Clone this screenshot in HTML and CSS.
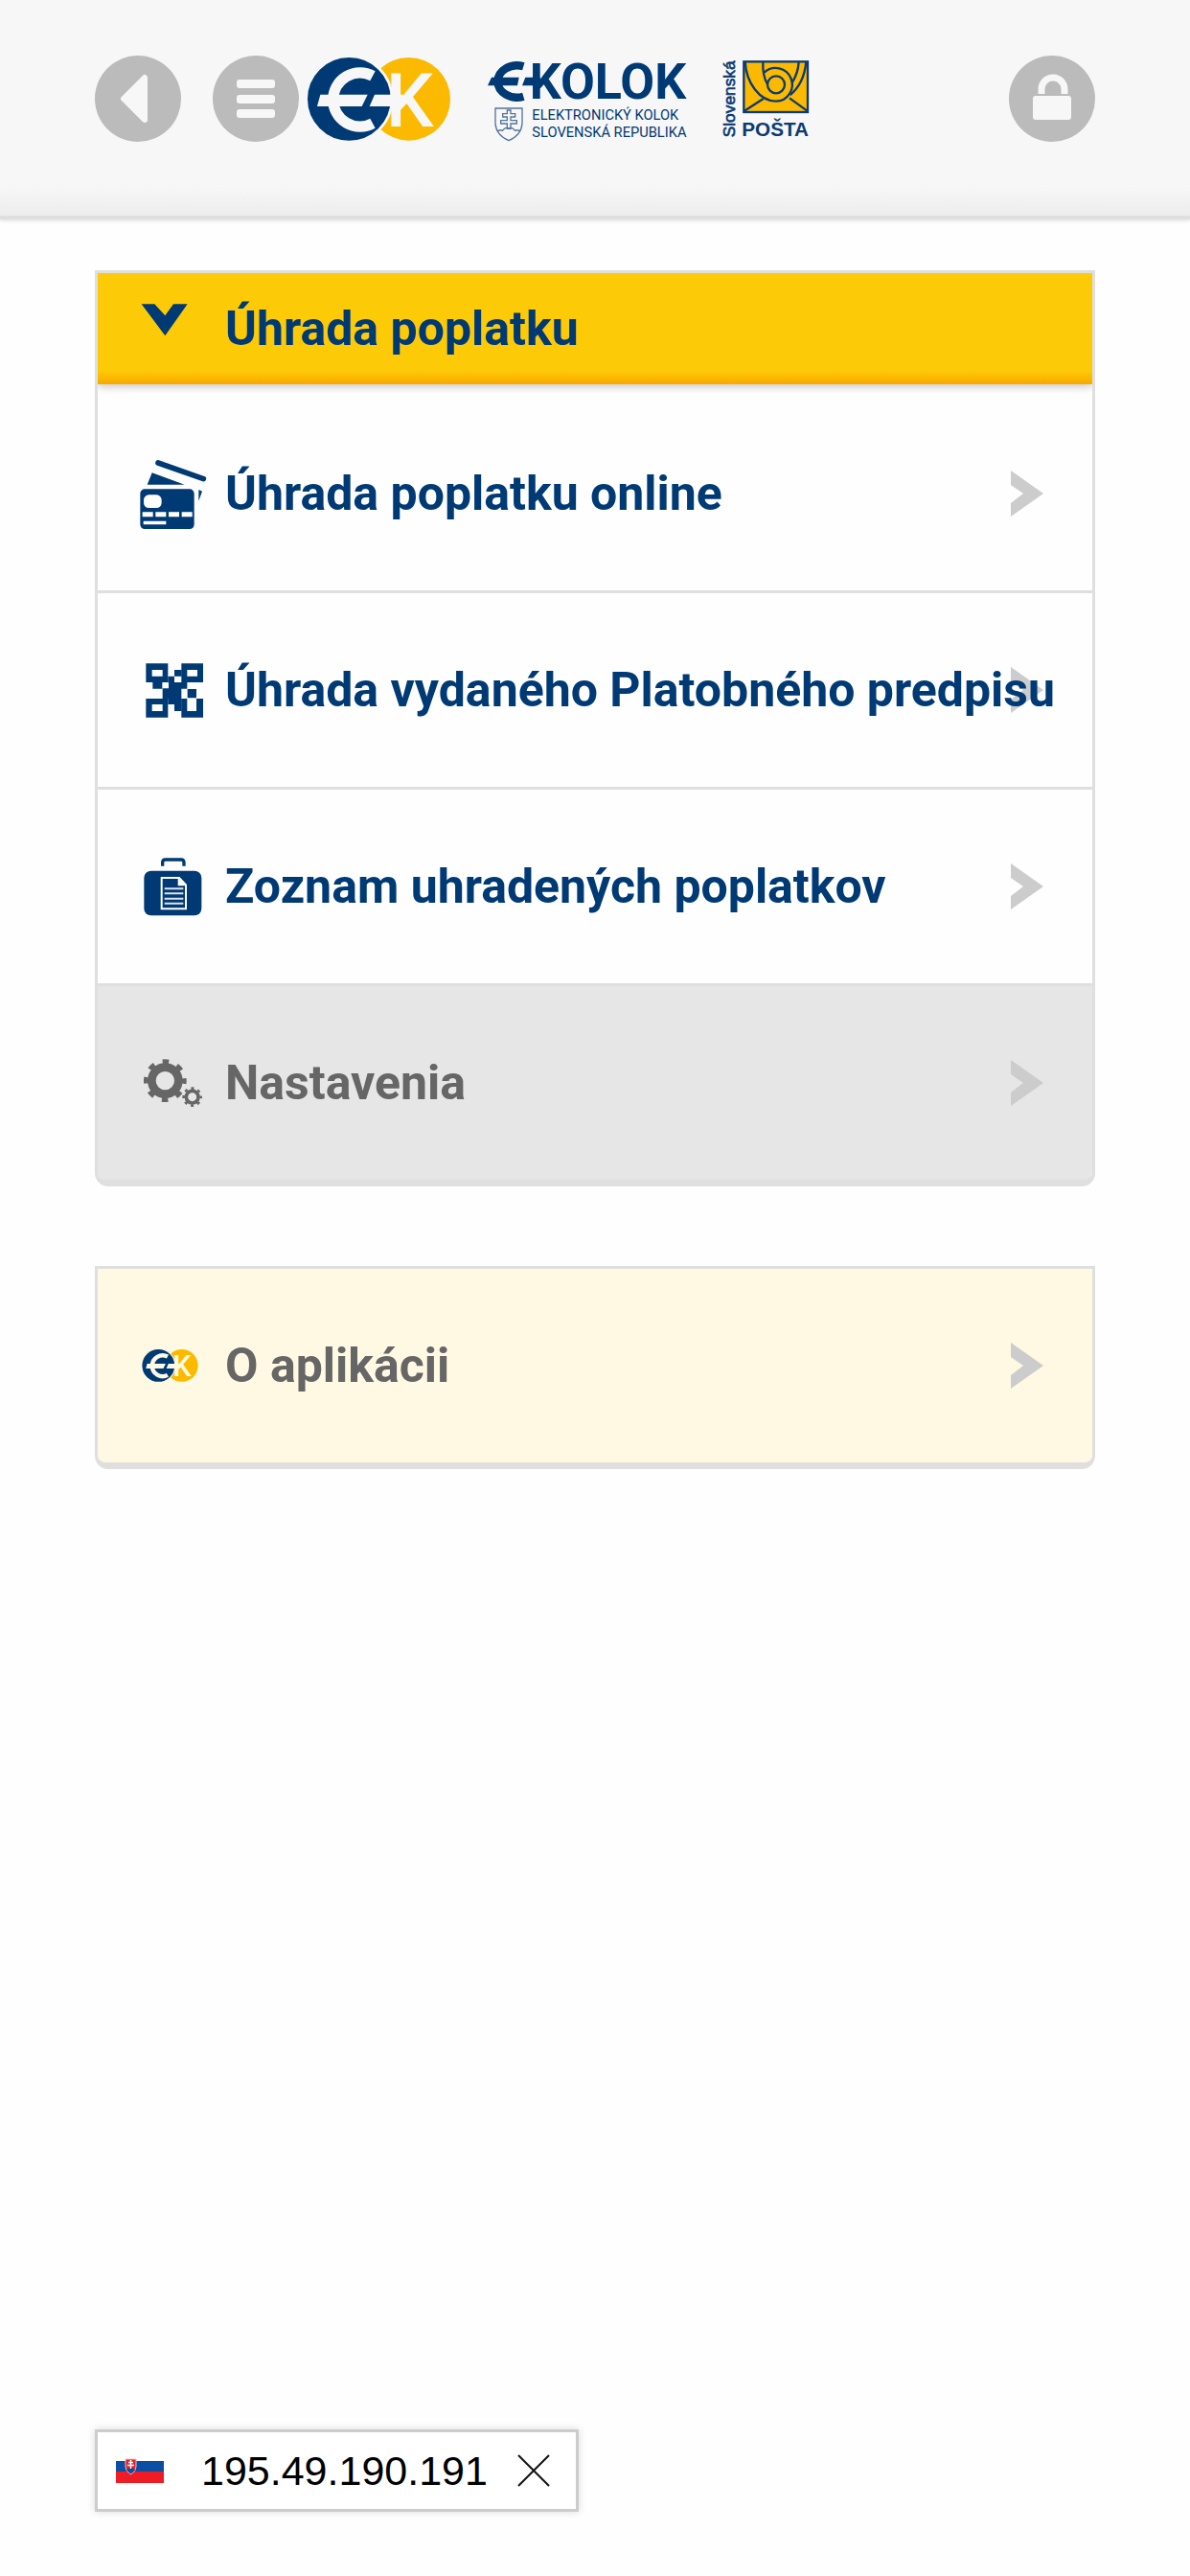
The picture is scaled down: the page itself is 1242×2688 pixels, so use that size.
FILE: index.html
```html
<!DOCTYPE html>
<html lang="sk">
<head>
	<meta charset="utf-8">
	<meta name="viewport" content="width=device-width, initial-scale=1">
	<title>E-KOLOK</title>
	<link rel="stylesheet" href="styles.css">
</head>
<body>
	<!-- shared shapes -->
	<svg class="defs" width="0" height="0" aria-hidden="true">
		<symbol id="ek" viewBox="0 0 447 261">
			<circle cx="317" cy="130" r="130" fill="#fbba00"/>
			<circle cx="130" cy="130" r="134" fill="#003a75" stroke="currentColor" stroke-width="8"/>
			<path d="M204 58A84 84 0 1 0 204 206" fill="none" stroke="currentColor" stroke-width="34"/>
			<path d="M40 116H188L170 153H30ZM210 116H300V153H194Z" fill="currentColor"/>
			<text class="ek-k" x="245" y="216" fill="currentColor">K</text>
		</symbol>
		<symbol id="arrow" viewBox="0 0 34 48">
			<path d="M0 0L34 24L0 48V34L13 24L0 15Z" fill="#ccc"/>
		</symbol>
	</svg>

	<header class="top">
		<button type="button" class="round" aria-label="Späť">
			<svg viewBox="0 0 90 90"><path d="M30 45L52 23V67Z" fill="#f7f7f7" stroke="#f7f7f7" stroke-width="6" stroke-linejoin="round"/></svg>
		</button>
		<button type="button" class="round menu-btn" aria-label="Menu">
			<svg viewBox="0 0 90 90" fill="#f7f7f7">
				<rect x="25" y="25" width="40" height="9" rx="3"/>
				<rect x="25" y="41" width="40" height="9" rx="3"/>
				<rect x="25" y="56" width="40" height="9" rx="3"/>
			</svg>
		</button>
		<svg class="logo-ek" aria-hidden="true"><use href="#ek"/></svg>
		<svg class="logo-kolok" viewBox="0 -16 627 270">
			<g fill="#003a75">
				<path d="M112 18A60 50 0 1 0 112 112" fill="none" stroke="#003a75" stroke-width="25"/>
				<path d="M12 52H98L93 78H0ZM118 52H165V78H108Z"/>
				<text class="kolok" x="131" y="120">KOLOK</text>
				<text class="kolok-sub" x="139" y="186">ELEKTRONICKÝ KOLOK</text>
				<text class="kolok-sub" x="139" y="240">SLOVENSKÁ REPUBLIKA</text>
			</g>
			<g fill="none" stroke="#55749b" stroke-width="4">
				<path d="M24 149H108V196Q106 232 66 250Q26 232 24 196Z"/>
				<path d="M61 155H72V166H86V176H72V187H91V197H72V213H61V197H41V187H61V176H47V166H61Z"/>
				<path d="M30 222Q36 214 46 219Q56 206 66 212Q76 206 86 219Q96 214 102 222"/>
			</g>
		</svg>
		<svg class="logo-posta" viewBox="0 -11 273 270">
			<g fill="none" stroke="#0b3a75" stroke-width="7">
				<rect x="67" y="8" width="200" height="158" fill="#fbba00"/>
				<path d="M69 162L128 124M265 162L210 122"/>
				<path d="M71 9C75 74 116 132 168 132A52 52 0 1 0 131 42"/>
				<path d="M127 9Q125 54 142 80M262 9Q255 78 212 112M239 9Q237 44 218 74"/>
				<circle cx="168" cy="80" r="27"/>
			</g>
			<g fill="#0b3a75">
				<text class="posta" x="61" y="242">POŠTA</text>
				<text class="slovenska" transform="translate(38 245) rotate(-90)">Slovenská</text>
			</g>
		</svg>
		<button type="button" class="round lock" aria-label="Prihlásenie">
			<svg viewBox="0 0 90 90">
				<rect x="25" y="42" width="40" height="25" rx="3" fill="#f7f7f7"/>
				<path d="M34 40V35A12 12 0 0 1 58 35V40" fill="none" stroke="#f7f7f7" stroke-width="7"/>
			</svg>
		</button>
	</header>

	<main>
		<nav class="panel">
			<button type="button" class="head" aria-expanded="true">
				<svg class="icon" viewBox="0 0 216 222"><path d="M8 34H49L82 70L108 34H152L82 133Z" fill="#003a75"/></svg>
				<span class="label">Úhrada poplatku</span>
			</button>
			<a class="row" href="#online">
				<svg class="icon" viewBox="0 0 216 222" fill="#003a75">
					<path d="M60 15L202 65" stroke="#003a75" stroke-width="17" stroke-linecap="round"/>
					<path d="M41 46L143 83H26ZM187 99L198 104L187 134Z"/>
					<rect x="4" y="97" width="169" height="125" rx="14"/>
					<g fill="#fff">
						<rect x="15" y="115" width="56" height="41" rx="16"/>
						<path d="M11 169h33v15h-33zM52 169h33v15h-33zM93 169h33v15h-33zM134 169h33v15h-33zM14 197h71v11h-71z"/>
					</g>
				</svg>
				<span class="label">Úhrada poplatku online</span>
				<svg class="arrow" aria-hidden="true"><use href="#arrow"/></svg>
			</a>
			<a class="row" href="#predpis">
				<svg class="icon" viewBox="0 0 216 222" fill="#003a75">
					<path d="M22 28h69v59h-69zM133 28h68v59h-68zM22 138h69v59h-69zM133 138h68v59h-68z"/>
					<path d="M43 87h30v20h-30zM91 68h20v20h-20zM111 48h23v20h-23zM93 87h58v20h-58zM74 106h59v33h-59zM91 138h43v18h-43zM111 155h23v22h-23zM152 108h28v28h-28z"/>
					<path d="M41 48h33v20h-33zM151 48h32v20h-32zM41 156h33v21h-33zM151 138h29v39h-29z" fill="#fff"/>
				</svg>
				<span class="label">Úhrada vydaného Platobného predpisu</span>
				<svg class="arrow" aria-hidden="true"><use href="#arrow"/></svg>
			</a>
			<a class="row" href="#zoznam">
				<svg class="icon" viewBox="0 0 216 222" fill="#003a75">
					<path d="M74 47V36Q74 27 83 27H132Q141 27 141 36V47" fill="none" stroke="#003a75" stroke-width="10"/>
					<rect x="16" y="62" width="180" height="140" rx="22"/>
					<path d="M71 84H126L147 106V181H71Z" fill="none" stroke="#fff" stroke-width="6"/>
					<path d="M122 84V109H147Z" fill="#fff"/>
					<path d="M80 118H139M80 133H139M80 149H139M80 164H139" stroke="#dde3ea" stroke-width="6"/>
				</svg>
				<span class="label">Zoznam uhradených poplatkov</span>
				<svg class="arrow" aria-hidden="true"><use href="#arrow"/></svg>
			</a>
			<a class="row settings" href="#nastavenia">
				<svg class="icon" viewBox="0 0 216 222" fill="none" stroke="#666">
					<circle cx="82" cy="104" r="42" stroke-width="26"/>
					<circle cx="82" cy="104" r="60" stroke-width="14" stroke-dasharray="20 27.12" stroke-dashoffset="10"/>
					<circle cx="167" cy="155" r="19" stroke-width="11"/>
					<circle cx="167" cy="155" r="27" stroke-width="8" stroke-dasharray="9 12.2" stroke-dashoffset="4.5"/>
				</svg>
				<span class="label">Nastavenia</span>
				<svg class="arrow" aria-hidden="true"><use href="#arrow"/></svg>
			</a>
		</nav>

		<nav class="panel">
			<a class="row about" href="#aplikacia">
				<svg class="icon" viewBox="0 0 72 74"><use href="#ek" x="3" y="20" width="59" height="34"/></svg>
				<span class="label">O aplikácii</span>
				<svg class="arrow" aria-hidden="true"><use href="#arrow"/></svg>
			</a>
		</nav>
	</main>

	<footer>
		<div class="ip">
			<svg class="flag" viewBox="0 0 50 26">
				<path d="M0 3H50V14H0Z" fill="#0b4ea2"/>
				<path d="M0 14H50V26H0Z" fill="#ee1c25"/>
				<path d="M10 1H21V9Q21 14 15.500 17Q10 14 10 9Z" fill="#ee1c25" stroke="#d9c9d6"/>
				<path d="M11 12Q15.500 8 20 12Q18 15 15.500 16Q13 15 11 12Z" fill="#0b4ea2"/>
				<path d="M15.500 2V11M13 4.500H18M12 7.500H19" stroke="#fff" stroke-width="1.500"/>
			</svg>
			<span class="address">195.49.190.191</span>
			<button type="button" class="close" aria-label="Zavrieť">
				<svg viewBox="0 0 34 34"><path d="M1 1L33 33M33 1L1 33" stroke="#111" stroke-width="2"/></svg>
			</button>
		</div>
	</footer>
</body>
</html>
```

FILE: styles.css
```css
* {
	box-sizing: border-box;
}
body {
	margin: 0;
	min-height: 100vh;
	display: flex;
	flex-direction: column;
	background: #fefefe;
	font-family: Roboto, "Liberation Sans", sans-serif;
}
button {
	margin: 0;
	padding: 0;
	border: none;
	font: inherit;
	cursor: pointer;
}
svg {
	display: block;
	flex: none;
	overflow: visible;
}
.defs {
	position: absolute;
}

/* top bar */
.top {
	display: flex;
	align-items: center;
	padding: 58px 99px 77px;
	background: linear-gradient(to top, #ededed, #f7f7f7 32px);
	border-bottom: 4px solid #dfdfdf;
	box-shadow: 0 1px 4px rgba(0, 0, 0, 0.15);
}
.round {
	width: 90px;
	height: 90px;
	flex: none;
	border-radius: 50%;
	background: #bbb;
}
.menu-btn {
	margin-left: 33px;
}
.lock {
	margin-left: auto;
}
.logo-ek {
	width: 149px;
	height: 87px;
	margin-left: 9px;
	color: #f7f7f7;
}
.logo-kolok {
	width: 209px;
	height: 90px;
	margin-left: 39px;
}
.logo-posta {
	width: 91px;
	height: 90px;
	margin-left: 36px;
}
.ek-k {
	font-size: 236px;
	font-weight: 500;
}
.kolok {
	font-size: 156px;
	font-weight: bold;
}
.kolok-sub {
	font-size: 44px;
}
.posta {
	font-family: "Liberation Sans", sans-serif;
	font-size: 62px;
	font-weight: bold;
}
.slovenska {
	font-family: "Liberation Sans", sans-serif;
	font-size: 52px;
	stroke: #0b3a75;
	stroke-width: 2px;
}

/* menu */
main {
	display: flex;
	flex-direction: column;
	gap: 83px;
	padding: 53px 99px 83px;
}
.panel {
	border: 3px solid #dfdfdf;
	border-bottom-width: 7px;
	border-radius: 0 0 14px 14px;
	background: #fefefe;
}
.head,
.row {
	display: flex;
	align-items: center;
	gap: 18px;
	width: 100%;
	padding: 0 51px 0 43px;
	font-size: 50px;
	font-weight: bold;
	text-align: left;
	text-decoration: none;
	color: #003a75;
}
.head {
	height: 116px;
	margin-bottom: 13px;
	background: linear-gradient(to top, #f9a800, #fcca06 14px);
	box-shadow: 0 3px 8px rgba(0, 0, 0, 0.2);
	clip-path: inset(0 0 -14px 0);
}
.row {
	height: 202px;
}
.row + .row {
	height: 205px;
	border-top: 3px solid #dfdfdf;
}
.icon {
	width: 72px;
	height: 74px;
}
/* long labels run over the arrow */
.label {
	flex: 1;
	min-width: 0;
	white-space: nowrap;
	z-index: 1;
}
.arrow {
	width: 34px;
	height: 48px;
}
.settings {
	background: #e6e6e6;
	color: #666;
	border-radius: 0 0 8px 8px;
}
.about {
	background: #fff8e3;
	color: #666;
	border-radius: 0 0 8px 8px;
}
.about .icon {
	color: #fff8e3;
}

/* address box */
footer {
	margin-top: auto;
	padding: 0 99px 67px;
}
.ip {
	display: inline-flex;
	align-items: center;
	height: 86px;
	padding: 0 27px 0 19px;
	border: 3px solid #ccc;
	background: #fff;
	box-shadow: 0 0 8px rgba(0, 0, 0, 0.15);
	vertical-align: top;
}
.flag {
	width: 50px;
	height: 26px;
}
.address {
	margin: 0 31px 0 39px;
	font-family: "Liberation Sans", Arial, sans-serif;
	font-size: 43px;
}
.close {
	width: 34px;
	height: 34px;
	background: none;
}
```
